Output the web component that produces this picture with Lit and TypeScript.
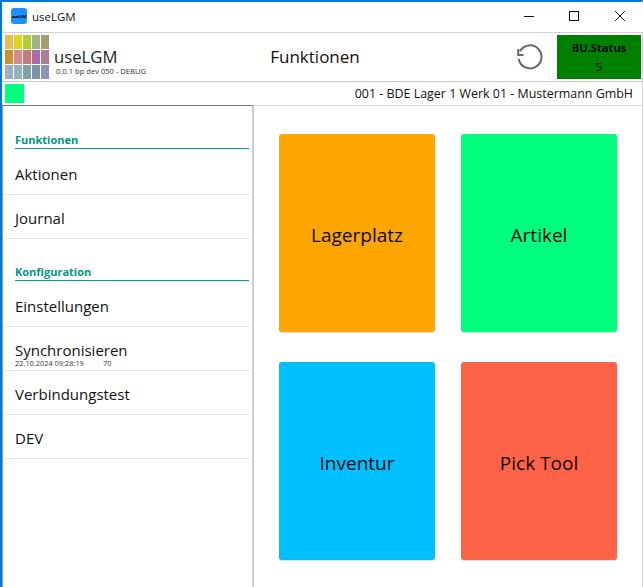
import { LitElement, html, css } from "lit";
import { customElement } from "lit/decorators.js";

const SW = [
  ["#e6bd55","#dfd31f","#b3cd2e","#a0b582","#a59a72"],
  ["#c9922e","#d18d8d","#cc7a75","#ab6ba6","#a97d96"],
  ["#9fb0c4","#93b5b8","#7fa3a3","#7d95a8","#8f93bb"],
];

@customElement("app-root")
export class AppRoot extends LitElement {
  static styles = css`
    :host { display: block; width: 643px; height: 587px; overflow: hidden; background: #fff; color: #111;
      font-family: "Open Sans", "Noto Sans", sans-serif; }
    .win { height: 587px; box-sizing: border-box; border-top: 2px solid #0078d7; border-left: 2px solid #0078d7; border-right: 1px solid #d4d4d4; display: flex; flex-direction: column; }
    .title { height: 30px; box-sizing: border-box; padding-bottom: 2px; margin-right: -1px; background: #fff; position: relative; display: flex; align-items: center; flex: none; }
    .app-ic { width: 16px; height: 16px; margin-left: 9px; background: #1e90ff; border-radius: 3px; font-size: 4px; font-weight: 700; color: #000; display: flex; align-items: center; justify-content: center; letter-spacing: -.2px; }
    .title-t { font-size: 11.5px; margin-left: 5px; flex: 1; }
    .ctl { width: 46px; height: 28px; display: flex; align-items: center; justify-content: center; }
    .top { height: 50px; box-sizing: border-box; border-top: 1px solid #d0d0d0; border-bottom: 1px solid #c8c8c8; display: flex; align-items: center; position: relative; flex: none; }
    .sw { display: grid; grid-template-columns: repeat(5, 8px); grid-auto-rows: 14px; gap: 1px; margin-left: 3px; }
    .brand { margin-left: 5px; padding-top: 7px; display: flex; flex-direction: column; }
    .brand b { font-weight: 400; font-size: 16.7px; line-height: 21px; color: #222; }
    .brand small { font-size: 7.6px; line-height: 9px; margin-left: 2px; color: #333; }
    .head { position: absolute; left: 0; right: 14px; top: 13px; line-height: 22px; text-align: center; font-size: 17px; }
    .spacer { flex: 1; }
    .reload { margin-right: 14px; display: block; }
    .status { width: 84px; height: 44px; background: #008000; text-align: center; font-size: 11.2px; line-height: 15px; margin-right: 1px; display: flex; flex-direction: column; justify-content: flex-start; gap: 4px; padding-top: 5px; box-sizing: border-box; color: #0a0a0a; }
    .status b { font-weight: 700; }
    .sub { height: 23px; display: flex; align-items: center; justify-content: space-between; flex: none; }
    .chip { width: 19px; height: 19px; background: #00ff7f; margin-left: 3px; }
    .sub span { font-size: 12.45px; margin-right: 9px; }
    .main { flex: 1; display: flex; min-height: 0; }
    .nav { width: 252px; box-sizing: border-box; border-top: 1px solid #777; border-left: 1px solid #999; border-right: 2px solid #ccc; flex: none; padding: 26px 2px 0 2px; }
    .sec { margin: 0 1px 2px 10px; font-size: 11px; font-weight: 700; color: #009688; border-bottom: 1px solid #00a090; line-height: 16px; height: 16px; }
    .sec.k { margin-top: 25px; }
    .it { height: 44px; box-sizing: border-box; border-bottom: 1px solid #e4e4e4; font-size: 15px; padding: 2px 0 0 10px; display: flex; flex-direction: column; justify-content: center; }
    .it.sync { justify-content: flex-start; padding-top: 13px; line-height: 20px; }
    .it small { font-size: 7.4px; line-height: 6px; color: #333; white-space: pre; }
    .grid { flex: 1; border-top: 1px solid #ddd; display: grid; grid-template-columns: 156px 156px; grid-auto-rows: 198px; gap: 30px 26px; padding: 28px 0 0 25px; }
    .tile { box-sizing: border-box; padding-top: 4px; border-radius: 3px; display: flex; align-items: center; justify-content: center; font-size: 19px; color: #0a0a0a; box-shadow: 0 1px 1px rgba(0,0,0,.15); }
    .t1 { background: #ffa500; }
    .t2 { background: #00ff7f; }
    .t3 { background: #00bfff; }
    .t4 { background: #ff6347; }
  `;
  render() {
    return html`<div class="win">
      <div class="title">
        <div class="app-ic">useLGM</div>
        <div class="title-t">useLGM</div>
        <div class="ctl"><svg width="12" height="12"><path d="M2 6.5h10" stroke="#111"/></svg></div>
        <div class="ctl"><svg width="12" height="12"><rect x="1.5" y="1.5" width="9" height="9" fill="none" stroke="#111"/></svg></div>
        <div class="ctl"><svg width="12" height="12"><path d="M1 1l10 10M11 1L1 11" stroke="#111"/></svg></div>
      </div>
      <div class="top">
        <div class="sw">${SW.flat().map((c) => html`<i style="background:${c}"></i>`)}</div>
        <div class="brand"><b>useLGM</b><small>0.0.1 bp dev 050 - DEBUG</small></div>
        <div class="head">Funktionen</div>
        <div class="spacer"></div>
        <svg class="reload" width="26" height="26" viewBox="0 0 26 26" fill="none" stroke="#666" stroke-width="2"><path d="M3 7.2A11.5 11.5 0 1 1 1.7 15"/><path d="M1.2 5V11H6.5"/></svg>
        <div class="status"><b>BU.Status</b><span>5</span></div>
      </div>
      <div class="sub"><div class="chip"></div><span>001 - BDE Lager 1 Werk 01 - Mustermann GmbH</span></div>
      <div class="main">
        <div class="nav">
          <div class="sec">Funktionen</div>
          <div class="it">Aktionen</div>
          <div class="it">Journal</div>
          <div class="sec k">Konfiguration</div>
          <div class="it">Einstellungen</div>
          <div class="it sync">Synchronisieren<small>22.10.2024 09:28:19          70</small></div>
          <div class="it">Verbindungstest</div>
          <div class="it">DEV</div>
        </div>
        <div class="grid">
          <div class="tile t1">Lagerplatz</div>
          <div class="tile t2">Artikel</div>
          <div class="tile t3">Inventur</div>
          <div class="tile t4">Pick Tool</div>
        </div>
      </div>
    </div>`;
  }
}
